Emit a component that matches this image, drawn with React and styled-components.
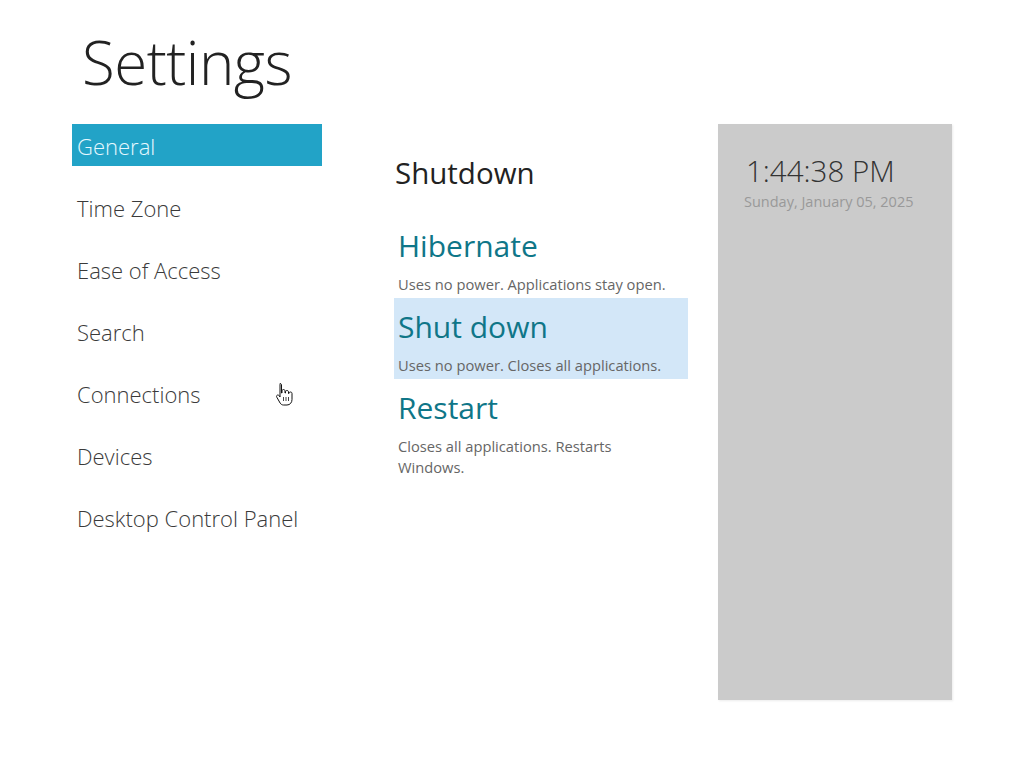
import React from 'react'
import styled, { createGlobalStyle } from 'styled-components'

const GlobalStyle = createGlobalStyle`
  html, body {
    margin: 0;
    padding: 0;
    background: #ffffff;
  }
  body {
    font-family: "Open Sans", "Noto Sans", "Liberation Sans", sans-serif;
  }
`

const Page = styled.div`
  position: relative;
  width: 1024px;
  height: 768px;
  overflow: hidden;
  background: #fff;
`

const Title = styled.h1`
  margin: 0;
  padding: 24px 0 0 82px;
  height: 100px;
  box-sizing: border-box;
  font-size: 60px;
  line-height: 76px;
  font-weight: 300;
  color: #222;
  letter-spacing: -0.5px;
`

const Main = styled.div`
  display: flex;
  padding: 24px 0 0 72px;
`

const Nav = styled.nav`
  display: flex;
  flex-direction: column;
  gap: 20px;
  width: 250px;
`

const NavItem = styled.div`
  height: 42px;
  line-height: 44px;
  padding-left: 5px;
  font-size: 22px;
  font-weight: 300;
  color: ${p => (p.$active ? '#e6f8ff' : '#3a3a3a')};
  background: ${p => (p.$active ? '#22a3c7' : 'transparent')};
  white-space: nowrap;
`

const Content = styled.section`
  width: 294px;
  margin-left: 72px;
`

const Heading = styled.h2`
  margin: 0 0 25px;
  padding: 30px 0 0 1px;
  font-size: 29.5px;
  line-height: 38px;
  font-weight: 400;
  color: #222;
`

const Option = styled.div`
  padding: 9px 4px 3px;
  background: ${p => (p.$hover ? '#d3e7f8' : 'transparent')};
`

const OptionTitle = styled.div`
  font-size: 30px;
  line-height: 40px;
  font-weight: 400;
  color: #0f7688;
`

const OptionDesc = styled.div`
  margin-top: 8px;
  font-size: 14.7px;
  line-height: 21px;
  color: #666;
`

const Panel = styled.aside`
  width: 234px;
  height: 576px;
  margin-left: 30px;
  background: #cbcbcb;
  box-shadow: 1px 1px 2px rgba(0, 0, 0, 0.08);
  box-sizing: border-box;
  padding: 28px 0 0 28px;
`

const Clock = styled.div`
  font-size: 29.5px;
  line-height: 38px;
  font-weight: 300;
  color: #333;
`

const DateText = styled.div`
  margin-top: 2px;
  margin-left: -2px;
  font-size: 14.5px;
  line-height: 20px;
  color: #999;
`

const Cursor = styled.svg`
  position: absolute;
  left: 275px;
  top: 382px;
`

const navItems = [
  'General',
  'Time Zone',
  'Ease of Access',
  'Search',
  'Connections',
  'Devices',
  'Desktop Control Panel'
]

const options = [
  { title: 'Hibernate', desc: ['Uses no power. Applications stay open.'] },
  { title: 'Shut down', desc: ['Uses no power. Closes all applications.'], hover: true },
  { title: 'Restart', desc: ['Closes all applications. Restarts', 'Windows.'] }
]

export default function App() {
  return (
    <Page>
      <GlobalStyle />
      <Title>Settings</Title>
      <Main>
        <Nav>
          {navItems.map((item, i) => (
            <NavItem key={item} $active={i === 0}>{item}</NavItem>
          ))}
        </Nav>
        <Content>
          <Heading>Shutdown</Heading>
          {options.map(o => (
            <Option key={o.title} $hover={o.hover}>
              <OptionTitle>{o.title}</OptionTitle>
              <OptionDesc>
                {o.desc.map((line, i) => (
                  <React.Fragment key={i}>
                    {i > 0 && <br />}
                    {line}
                  </React.Fragment>
                ))}
              </OptionDesc>
            </Option>
          ))}
        </Content>
        <Panel>
          <Clock>1:44:38 PM</Clock>
          <DateText>Sunday, January 05, 2025</DateText>
        </Panel>
      </Main>
      <Cursor width="20" height="26" viewBox="0 0 20 26">
        <path
          d="M5 1.5c.9 0 1.5.6 1.5 1.5v8h.5V9c0-.9.6-1.5 1.5-1.5S10 8.1 10 9v2h.5v-1c0-.9.6-1.5 1.5-1.5s1.5.6 1.5 1.5v1.5h.5c0-.9.6-1.5 1.5-1.5s1.5.6 1.5 1.5v6c0 3-2 5.5-5 5.5H8.5c-1.6 0-2.6-.8-3.4-2L1.8 15.2c-.5-.8-.3-1.6.4-2 .7-.4 1.5-.2 2 .5l.8 1.3V3c0-.9.1-1.5 0-1.5z"
          fill="#fff"
          stroke="#111"
          strokeWidth="1"
          strokeLinejoin="round"
        />
        <path d="M8.5 15v4M11 15v4M13.5 15v4" stroke="#111" strokeWidth="0.8" />
      </Cursor>
    </Page>
  )
}
